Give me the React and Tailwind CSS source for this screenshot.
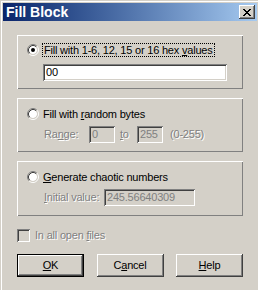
import React from 'react';

function Radio({ checked }) {
  return (
    <svg width="12" height="12" viewBox="0 0 12 12" className="shrink-0">
      <circle cx="6" cy="6" r="4" fill="#fff" />
      <path d="M2.11 9.89A5.5 5.5 0 0 1 9.89 2.11" stroke="#808080" fill="none" />
      <path d="M9.89 2.11A5.5 5.5 0 0 1 2.11 9.89" stroke="#fff" fill="none" />
      <path d="M2.82 9.18A4.5 4.5 0 0 1 9.18 2.82" stroke="#404040" fill="none" />
      <path d="M9.18 2.82A4.5 4.5 0 0 1 2.82 9.18" stroke="#d4d0c8" fill="none" />
      {checked && <circle cx="6" cy="6" r="2" fill="#000" />}
    </svg>
  );
}

function CloseGlyph() {
  // 8x7 pixel cross like the classic caption button
  const px = [
    [0, 0], [1, 0], [6, 0], [7, 0],
    [1, 1], [2, 1], [5, 1], [6, 1],
    [2, 2], [3, 2], [4, 2], [5, 2],
    [3, 3], [4, 3],
    [2, 4], [3, 4], [4, 4], [5, 4],
    [1, 5], [2, 5], [5, 5], [6, 5],
    [0, 6], [1, 6], [6, 6], [7, 6],
  ];
  return (
    <svg width="8" height="7" viewBox="0 0 8 7" shapeRendering="crispEdges">
      {px.map(([x, y]) => <rect key={`${x}-${y}`} x={x} y={y} width="1" height="1" fill="#000" />)}
    </svg>
  );
}

const raised = 'shadow-[inset_-1px_-1px_#404040,inset_1px_1px_#fff,inset_-2px_-2px_#808080,inset_2px_2px_#d4d0c8]';
const sunken = 'shadow-[inset_1px_1px_#808080,inset_-1px_-1px_#fff,inset_2px_2px_#404040,inset_-2px_-2px_#d4d0c8]';
const group = 'shadow-[inset_1px_1px_#fff,inset_-1px_-1px_#808080]';
const grayed = 'text-[#808080] [text-shadow:1px_1px_0_#fff]';

function Button({ children, def }) {
  return (
    <div className={`w-[67px] h-[23px] ${def ? 'border border-black' : ''}`}>
      <div className={`h-full flex items-center justify-center ${raised}`}>
        {children}
      </div>
    </div>
  );
}

export default function App() {
  return (
    <div className="w-[258px] h-[290px] bg-[#d4d0c8] border-t border-l border-[#d4d0c8] border-r-[#404040] border-b-[#404040] font-['Liberation_Sans',Arial,sans-serif] text-[11px] tracking-[-0.2px] text-black overflow-hidden">
      <div className="h-full border-t border-l border-white border-r-[#808080] border-b-[#808080] p-px">
        {/* title bar */}
        <div className="h-[18px] bg-linear-to-r from-[#0a246a] to-[#a6caf0] flex items-center pl-[3px] pr-[2px]">
          <span className="text-white font-bold text-[14px] tracking-normal leading-none">Fill Block</span>
          <div className={`ml-auto w-[16px] h-[14px] bg-[#d4d0c8] flex items-center justify-center ${raised}`}>
            <CloseGlyph />
          </div>
        </div>

        <div className="px-[14px] pt-[14px]">
          {/* group 1 */}
          <div className={`h-[54px] ${group} pl-[10px] pt-[9px]`}>
            <div className="flex items-start h-[14px]">
              <Radio checked />
              <div className="ml-[3px] -mt-px h-[14px] border border-dotted border-black pl-px pr-px flex items-center leading-none">
                <span>Fill with 1-6, 12, 15 or 16 hex <span className="underline">v</span>alues</span>
              </div>
            </div>
            <div className={`mt-[6px] ml-[16px] w-[184px] h-[17px] bg-white ${sunken} flex items-center pl-[3px] leading-none`}>
              00
            </div>
          </div>

          {/* group 2 */}
          <div className={`mt-[9px] h-[54px] ${group} pl-[10px] pt-[10px]`}>
            <div className="flex items-start h-[14px]">
              <Radio />
              <div className="ml-[4px] h-[12px] flex items-center leading-none">
                <span>Fill with <span className="underline">r</span>andom bytes</span>
              </div>
            </div>
            <div className="mt-[4px] ml-[17px] flex items-center h-[17px]">
              <span className={`w-[45px] leading-none ${grayed}`}>Ra<span className="underline">n</span>ge:</span>
              <div className={`w-[26px] h-[17px] ${sunken} flex items-center pl-[3px] text-[#808080] leading-none`}>0</div>
              <span className={`ml-[5px] w-[17px] leading-none ${grayed}`}><span className="underline">t</span>o</span>
              <div className={`w-[26px] h-[17px] ${sunken} flex items-center pl-[3px] text-[#808080] leading-none`}>255</div>
              <span className={`ml-[7px] leading-none ${grayed}`}>(0-255)</span>
            </div>
          </div>

          {/* group 3 */}
          <div className={`mt-[9px] h-[55px] ${group} pl-[10px] pt-[10px]`}>
            <div className="flex items-start h-[14px]">
              <Radio />
              <div className="ml-[4px] h-[12px] flex items-center leading-none">
                <span><span className="underline">G</span>enerate chaotic numbers</span>
              </div>
            </div>
            <div className="mt-[4px] ml-[17px] flex items-center h-[17px]">
              <span className={`w-[60px] leading-none ${grayed}`}><span className="underline">I</span>nitial value:</span>
              <div className={`w-[91px] h-[17px] ${sunken} flex items-center pl-[3px] text-[#808080] leading-none`}>245.56640309</div>
            </div>
          </div>

          {/* checkbox */}
          <div className="mt-[13px] flex items-center h-[13px]">
            <div className={`w-[13px] h-[13px] ${sunken}`} />
            <span className={`ml-[5px] leading-none ${grayed}`}>In all open <span className="underline">f</span>iles</span>
          </div>

          {/* buttons */}
          <div className="mt-[12px] flex justify-between">
            <Button def><span><span className="underline">O</span>K</span></Button>
            <Button><span>C<span className="underline">a</span>ncel</span></Button>
            <Button><span><span className="underline">H</span>elp</span></Button>
          </div>
        </div>
      </div>
    </div>
  );
}
